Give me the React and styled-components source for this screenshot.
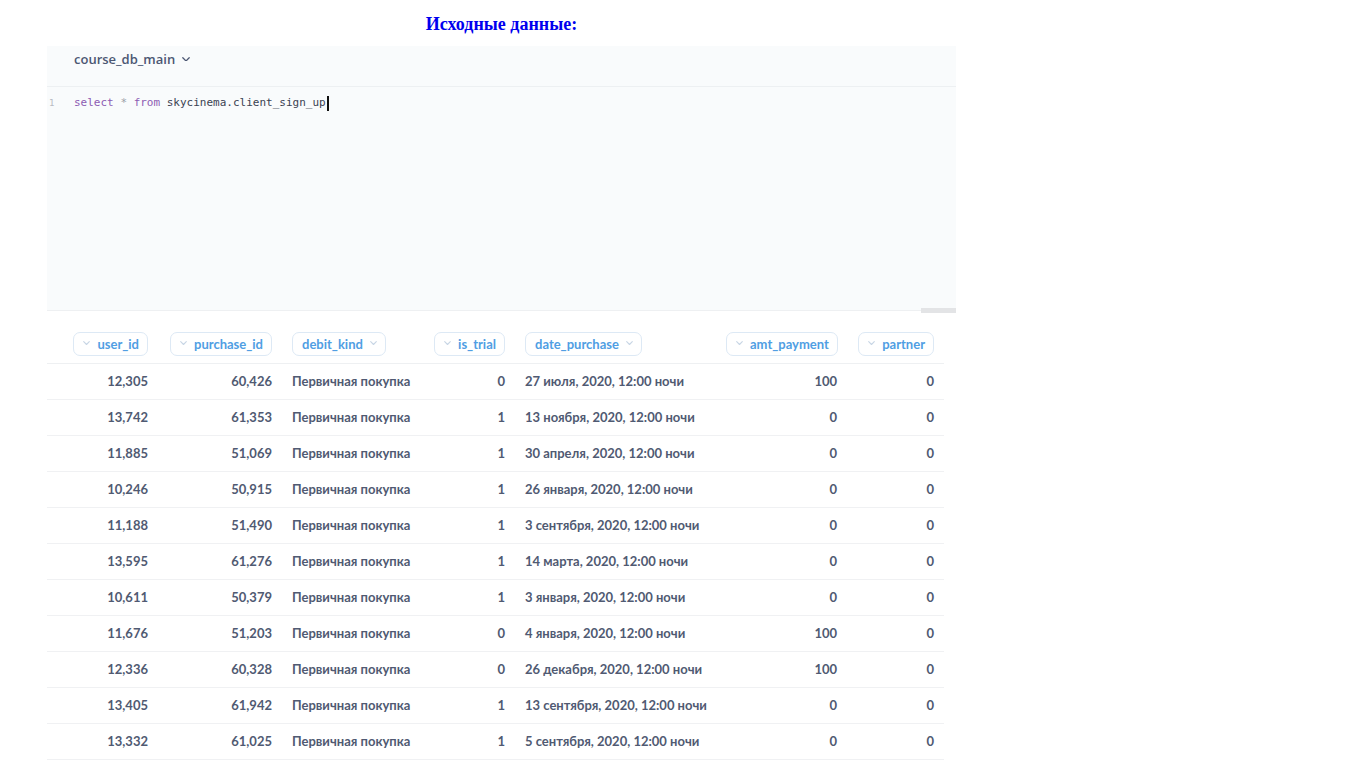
import React from "react";
import styled, { createGlobalStyle } from "styled-components";

const Global = createGlobalStyle`
  html, body { margin: 0; padding: 0; background: #ffffff; }
  body { font-family: Lato, "Noto Sans", sans-serif; }
`;

const Page = styled.div`
  width: 909px;
  margin-left: 47px;
  padding-top: 12px;
`;

const Title = styled.h3`
  margin: 0 0 10px;
  text-align: center;
  font-family: "Liberation Serif", "DejaVu Serif", serif;
  font-weight: bold;
  font-size: 18px;
  line-height: 24px;
  color: #0000ee;
`;

const Editor = styled.div`
  position: relative;
  height: 264px;
  background: #f9fbfc;
  border-bottom: 1px solid #eef0f2;
`;

const EditorHeader = styled.div`
  height: 41px;
  box-sizing: border-box;
  padding: 4px 0 0 27px;
  border-bottom: 1px solid #edf0f2;
  display: flex;
  align-items: flex-start;
`;

const DbPicker = styled.div`
  display: flex;
  align-items: center;
  gap: 7px;
  font-family: "Open Sans", "Noto Sans", sans-serif;
  font-weight: 600;
  font-size: 13px;
  line-height: 18px;
  color: #4c5773;
`;

const CodeLine = styled.div`
  display: flex;
  align-items: center;
  margin-top: 8px;
  font-family: "DejaVu Sans Mono", "Liberation Mono", monospace;
  font-size: 11px;
  line-height: 16px;
  color: #3b4252;
`;

const Gutter = styled.span`
  width: 27px;
  box-sizing: border-box;
  padding-left: 2px;
  color: #b8bcc2;
  font-size: 9px;
`;

const Kw = styled.span`
  color: ${(p) => (p.$op ? "#9aa0a8" : "#8d5bb3")};
`;

const Caret = styled.span`
  display: inline-block;
  width: 2px;
  height: 15px;
  background: #111;
  margin-left: 1px;
`;

const ScrollThumb = styled.div`
  position: absolute;
  right: 0;
  bottom: -3px;
  width: 35px;
  height: 5px;
  background: #e3e4e6;
`;

const Table = styled.table`
  margin-top: 17px;
  border-collapse: collapse;
  table-layout: fixed;
  width: 897px;
  font-family: Lato, "Noto Sans", sans-serif;
  font-size: 13px;
  font-weight: 700;
  color: #505a72;
`;

const Th = styled.th`
  height: 35px;
  padding: 0 10px 7px;
  box-sizing: border-box;
  text-align: ${(p) => (p.$right ? "right" : "left")};
  vertical-align: bottom;
  border-bottom: 1px solid #eef0f2;
  font-weight: 700;
`;

const Pill = styled.span`
  display: inline-flex;
  align-items: center;
  gap: 7px;
  height: 24px;
  box-sizing: border-box;
  padding: 0 8px 0 9px;
  border: 1px solid #dde9f5;
  border-radius: 7px;
  color: #509ee3;
  font-size: 13px;
  font-weight: 700;
  white-space: nowrap;
`;

const Td = styled.td`
  height: 36px;
  padding: 0 10px;
  box-sizing: border-box;
  text-align: ${(p) => (p.$right ? "right" : "left")};
  border-bottom: 1px solid #f0f1f3;
  white-space: nowrap;
  overflow: hidden;
`;

const Chevron = ({ color = "#c8d6e5", size = 7 }) => (
  <svg width={size} height={size * 0.6} viewBox="0 0 10 6" fill="none">
    <path d="M1 1l4 4 4-4" stroke={color} strokeWidth="1.6" strokeLinecap="round" strokeLinejoin="round" />
  </svg>
);

const columns = [
  { key: "user_id", w: 111, right: true },
  { key: "purchase_id", w: 124, right: true },
  { key: "debit_kind", w: 141, right: false },
  { key: "is_trial", w: 92, right: true },
  { key: "date_purchase", w: 201, right: false },
  { key: "amt_payment", w: 131, right: true },
  { key: "partner", w: 97, right: true },
];

const K = "Первичная покупка";
const rows = [
  ["12,305", "60,426", K, "0", "27 июля, 2020, 12:00 ночи", "100", "0"],
  ["13,742", "61,353", K, "1", "13 ноября, 2020, 12:00 ночи", "0", "0"],
  ["11,885", "51,069", K, "1", "30 апреля, 2020, 12:00 ночи", "0", "0"],
  ["10,246", "50,915", K, "1", "26 января, 2020, 12:00 ночи", "0", "0"],
  ["11,188", "51,490", K, "1", "3 сентября, 2020, 12:00 ночи", "0", "0"],
  ["13,595", "61,276", K, "1", "14 марта, 2020, 12:00 ночи", "0", "0"],
  ["10,611", "50,379", K, "1", "3 января, 2020, 12:00 ночи", "0", "0"],
  ["11,676", "51,203", K, "0", "4 января, 2020, 12:00 ночи", "100", "0"],
  ["12,336", "60,328", K, "0", "26 декабря, 2020, 12:00 ночи", "100", "0"],
  ["13,405", "61,942", K, "1", "13 сентября, 2020, 12:00 ночи", "0", "0"],
  ["13,332", "61,025", K, "1", "5 сентября, 2020, 12:00 ночи", "0", "0"],
];

export default function App() {
  return (
    <>
      <Global />
      <Page>
        <Title>Исходные данные:</Title>
        <Editor>
          <EditorHeader>
            <DbPicker>
              course_db_main
              <Chevron color="#4c5773" size={8} />
            </DbPicker>
          </EditorHeader>
          <CodeLine>
            <Gutter>1</Gutter>
            <span>
              <Kw>select</Kw> <Kw $op>*</Kw> <Kw>from</Kw> skycinema.client_sign_up
            </span>
            <Caret />
          </CodeLine>
          <ScrollThumb />
        </Editor>
        <Table>
          <colgroup>
            {columns.map((c) => (
              <col key={c.key} style={{ width: c.w }} />
            ))}
          </colgroup>
          <thead>
            <tr>
              {columns.map((c) => (
                <Th key={c.key} $right={c.right}>
                  <Pill>
                    {c.right && <Chevron />}
                    {c.key}
                    {!c.right && <Chevron />}
                  </Pill>
                </Th>
              ))}
            </tr>
          </thead>
          <tbody>
            {rows.map((r, i) => (
              <tr key={i}>
                {r.map((v, j) => (
                  <Td key={j} $right={columns[j].right}>
                    {v}
                  </Td>
                ))}
              </tr>
            ))}
          </tbody>
        </Table>
      </Page>
    </>
  );
}
